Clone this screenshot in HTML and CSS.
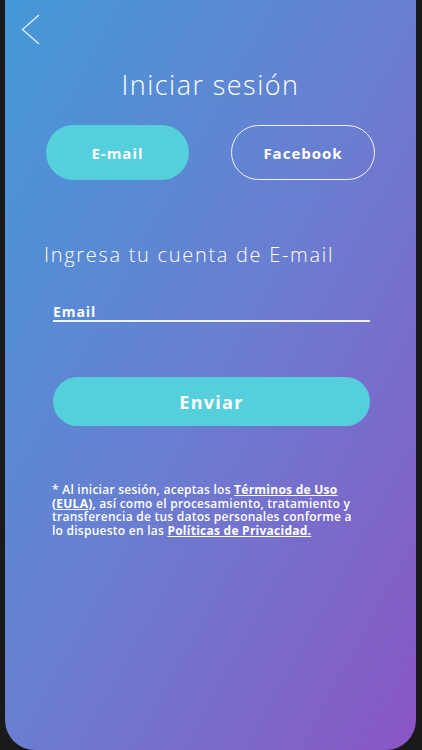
FILE: index.html
```html
<!DOCTYPE html>
<html lang="es">
<head>
<meta charset="utf-8">
<title>Iniciar sesión</title>
<link rel="stylesheet" href="styles.css">
</head>
<body>
<div class="screen">
  <div class="back">
    <svg width="20" height="31" viewBox="0 0 20 31"><path d="M18 1 L1.5 15.5 L18 30" fill="none" stroke="rgba(255,255,255,0.85)" stroke-width="1.3"/></svg>
  </div>
  <h1 class="title">Iniciar sesión</h1>
  <div class="tabs">
    <div class="tab tab-active">E-mail</div>
    <div class="tab tab-outline">Facebook</div>
  </div>
  <p class="prompt">Ingresa tu cuenta de E-mail</p>
  <div class="field">Email</div>
  <div class="send">Enviar</div>
  <p class="legal">* Al iniciar sesión, aceptas los <u>Términos de Uso (EULA)</u>, así como el procesamiento, tratamiento y transferencia de tus datos personales conforme a lo dispuesto en las <u>Políticas de Privacidad.</u></p>
</div>
</body>
</html>
```

FILE: styles.css
```css
html, body {
  margin: 0;
  padding: 0;
  background: #1a1a1a;
}
body {
  width: 422px;
  height: 750px;
  overflow: hidden;
  font-family: "Open Sans", "Noto Sans", sans-serif;
  color: #fff;
}
.screen {
  margin: 0 6px 0 5px;
  height: 750px;
  border-radius: 0 0 30px 30px;
  background: linear-gradient(to bottom right, #4499d9 0%, #6a7ed0 50%, #8a56c5 100%);
  display: flex;
  flex-direction: column;
  padding-top: 14px;
  box-sizing: border-box;
}
.back {
  height: 31px;
  margin-left: 16px;
}
.back svg { display: block; }
.title {
  margin: 25px 0 0;
  text-align: center;
  font-weight: 300;
  font-size: 27px;
  line-height: 30px;
  letter-spacing: 1.45px;
}
.tabs {
  display: flex;
  justify-content: center;
  gap: 42px;
  margin-top: 25px;
}
.tab {
  width: 143px;
  height: 55px;
  border-radius: 28px;
  box-sizing: border-box;
  display: flex;
  align-items: center;
  justify-content: center;
  font-weight: 700;
  font-size: 15px;
  letter-spacing: 1px;
}
.tab-active {
  background: #55cfdb;
}
.tab-outline {
  width: 144px;
  border: 1.5px solid rgba(255,255,255,0.9);
}
.prompt {
  margin: 62px 0 0 39px;
  font-weight: 300;
  font-size: 20px;
  line-height: 26px;
  letter-spacing: 1.7px;
}
.field {
  margin: 36px 46px 0 48px;
  font-weight: 700;
  font-size: 14px;
  line-height: 16px;
  letter-spacing: 0.9px;
  border-bottom: 2px solid rgba(255,255,255,0.9);
}
.send {
  margin: 55px 46px 0 48px;
  height: 49px;
  border-radius: 25px;
  background: #55cfdb;
  display: flex;
  align-items: center;
  justify-content: center;
  font-weight: 700;
  font-size: 18px;
  letter-spacing: 1.3px;
}
.legal {
  margin: 57px 57px 0 47px;
  font-weight: 600;
  font-size: 12px;
  line-height: 13.5px;
  letter-spacing: 0.25px;
}
.legal u {
  font-weight: 700;
  text-underline-offset: 1px;
}
```
